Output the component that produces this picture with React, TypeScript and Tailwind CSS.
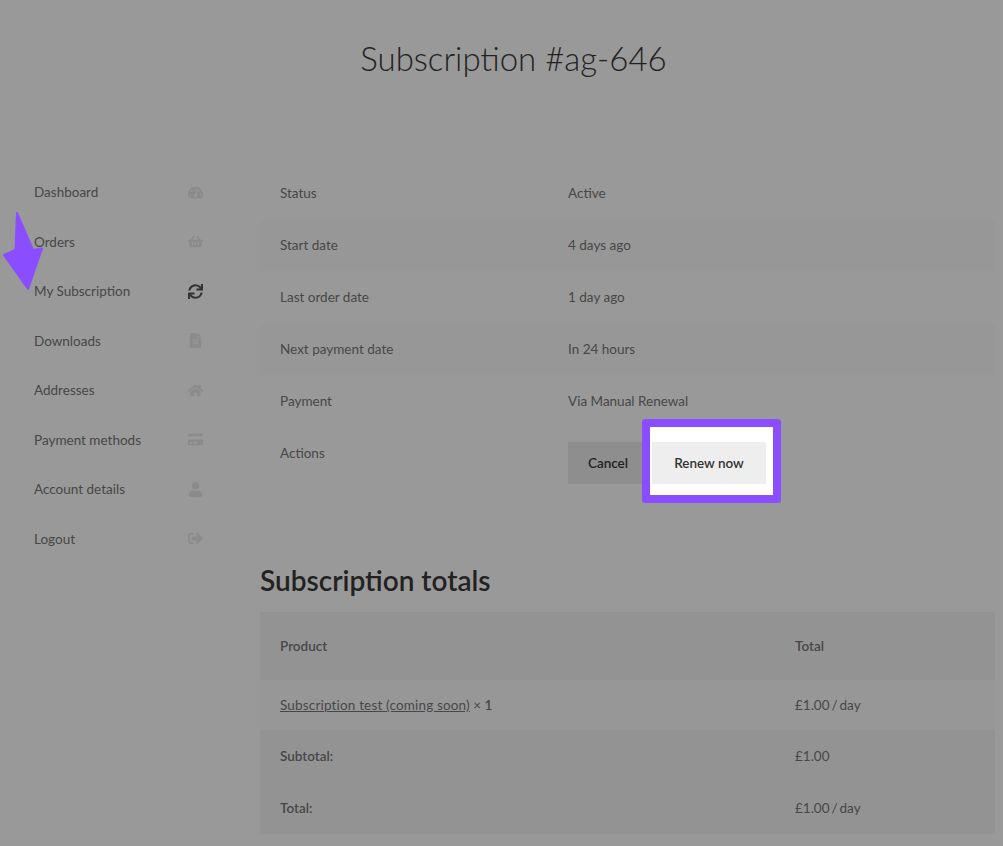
import { FaCreditCard, FaFileAlt, FaHome, FaShoppingBasket, FaSignOutAlt, FaSync, FaTachometerAlt, FaUser } from "react-icons/fa";

const menu = [
  { label: "Dashboard", icon: FaTachometerAlt },
  { label: "Orders", icon: FaShoppingBasket },
  { label: "My Subscription", icon: FaSync, active: true },
  { label: "Downloads", icon: FaFileAlt },
  { label: "Addresses", icon: FaHome },
  { label: "Payment methods", icon: FaCreditCard },
  { label: "Account details", icon: FaUser },
  { label: "Logout", icon: FaSignOutAlt },
];

const details = [
  { label: "Status", value: "Active" },
  { label: "Start date", value: "4 days ago", dark: true },
  { label: "Last order date", value: "1 day ago" },
  { label: "Next payment date", value: "In 24 hours", dark: true },
  { label: "Payment", value: "Via Manual Renewal" },
];

export default function App() {
  return (
    <div className="relative h-[846px] overflow-hidden bg-[#999999] font-['Lato',sans-serif] text-[13.5px] text-[#474747]">
      <h1 className="pt-[36px] pl-[24px] text-center text-[33px] leading-[44px] font-light text-[#222222]">Subscription #ag-646</h1>

      <div className="mt-[87px] flex">
        {/* sidebar */}
        <nav className="ml-[34px] w-[169px] shrink-0 pt-[0.5px]">
          {menu.map((item) => (
            <div key={item.label} className="flex h-[49.5px] items-center justify-between">
              <span>{item.label}</span>
              <item.icon className={item.active ? "text-[15px] text-[#333333]" : "text-[15px] text-[#8b8b8b]"} />
            </div>
          ))}
        </nav>

        {/* main column */}
        <main className="ml-[57px] w-[735px] shrink-0">
          {details.map((row) => (
            <div key={row.label} className={`flex h-[52px] items-center px-[20px] ${row.dark ? "bg-[#979797]" : ""}`}>
              <span className="w-[288px]">{row.label}</span>
              <span>{row.value}</span>
            </div>
          ))}
          <div className="flex h-[68px] px-[20px] pt-[15px]">
            <span className="w-[288px] leading-[20px] mt-[1px]">Actions</span>
            <div className="flex items-start">
              <button className="h-[42px] w-[82px] pr-[2px] bg-[#8e8e8e] font-semibold text-[#222222]">Cancel</button>
              <div className="relative ml-[2px]">
                <div className="absolute -top-[23px] -right-[15px] -bottom-[19px] -left-[10px] rounded-[3px] border-[8px] border-[#8a4dff] bg-white" />
                <button className="relative block h-[42px] w-[114px] bg-[#eeeeee] font-semibold text-[#333333]">Renew now</button>
              </div>
            </div>
          </div>

          <h2 className="mt-[68px] mb-[15px] text-[28px] leading-[34px] font-semibold text-[#222222]">Subscription totals</h2>

          <div className="flex h-[68px] items-center bg-[#939393] px-[20px] font-semibold">
            <span className="w-[515px]">Product</span>
            <span>Total</span>
          </div>
          <div className="flex h-[50px] items-center bg-[#979797] px-[20px]">
            <span className="w-[515px]">
              <span className="underline tracking-[0.17px]">Subscription test (coming soon)</span> × <b className="font-semibold">1</b>
            </span>
            <span className="[word-spacing:-1.5px]">£1.00 / day</span>
          </div>
          <div className="flex h-[52px] items-center bg-[#939393] px-[20px]">
            <span className="w-[515px] font-semibold">Subtotal:</span>
            <span>£1.00</span>
          </div>
          <div className="flex h-[52px] items-center bg-[#939393] px-[20px]">
            <span className="w-[515px] font-semibold">Total:</span>
            <span className="[word-spacing:-1.5px]">£1.00 / day</span>
          </div>
        </main>
      </div>

      {/* annotation arrow */}
      <svg className="absolute top-[210px] left-0" width="50" height="84" viewBox="0 0 50 84">
        <path d="M17 3 L33 40 L42 38.5 L28 79 L4 45 L15.5 40 Z" fill="#8a4dff" stroke="#8a4dff" strokeWidth="2" strokeLinejoin="round" />
      </svg>
    </div>
  );
}
